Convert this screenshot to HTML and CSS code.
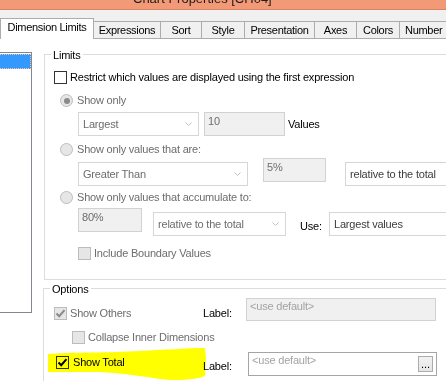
FILE: index.html
```html
<!DOCTYPE html>
<html>
<head>
<meta charset="utf-8">
<title>Chart Properties</title>
<link rel="stylesheet" href="styles.css">
</head>
<body>
<div class="titlebar"><span class="title">Chart Properties [CH04]</span></div>
<div class="tabstrip">
  <div class="tab active t-dim">Dimension Limits</div>
  <div class="tab t-expr">Expressions</div>
  <div class="tab t-sort">Sort</div>
  <div class="tab t-style">Style</div>
  <div class="tab t-pres">Presentation</div>
  <div class="tab t-axes">Axes</div>
  <div class="tab t-colors">Colors</div>
  <div class="tab t-number">Number</div>
</div>
<div class="panel">
  <div class="dimlist"><div class="dimitem"></div></div>
  <div class="groups">
    <fieldset class="group limits">
      <legend>Limits</legend>
      <div class="gbody limits-body">
        <div class="row r-restrict">
          <span class="cb"></span><span class="txt">Restrict which values are displayed using the first expression</span>
        </div>
        <div class="row r-showonly">
          <span class="radio on"></span><span class="txt dis">Show only</span>
        </div>
        <div class="row r-largest">
          <div class="combo w-largest"><span class="ctext dis">Largest</span><svg class="chev" width="7" height="4" viewBox="0 0 7 4"><path d="M0.5 0.5 L3.5 3.5 L6.5 0.5"/></svg></div>
          <div class="edit w-ten">10</div>
          <span class="txt values">Values</span>
        </div>
        <div class="row r-radio2">
          <span class="radio"></span><span class="txt dis">Show only values that are:</span>
        </div>
        <div class="row r-greater">
          <div class="combo w-greater drop"><span class="ctext dis">Greater Than</span><svg class="chev" width="7" height="4" viewBox="0 0 7 4"><path d="M0.5 0.5 L3.5 3.5 L6.5 0.5"/></svg></div>
          <div class="edit w-five">5%</div>
          <div class="combo w-rel1 drop"><span class="ctext dark">relative to the total</span></div>
        </div>
        <div class="row r-radio3">
          <span class="radio"></span><span class="txt dis">Show only values that accumulate to:</span>
        </div>
        <div class="row r-accum">
          <div class="edit w-eighty">80%</div>
          <div class="combo w-rel2 drop"><span class="ctext dis">relative to the total</span><svg class="chev" width="7" height="4" viewBox="0 0 7 4"><path d="M0.5 0.5 L3.5 3.5 L6.5 0.5"/></svg></div>
          <span class="txt use">Use:</span>
          <div class="combo w-lv drop"><span class="ctext dark">Largest values</span></div>
        </div>
        <div class="row r-include">
          <span class="cb dis"></span><span class="txt dis">Include Boundary Values</span>
        </div>
      </div>
    </fieldset>
    <fieldset class="group options">
      <legend>Options</legend>
      <div class="gbody options-body">
        <div class="row r-others">
          <div class="opt-left w-left1">
            <span class="cb dis"><svg width="11" height="11" viewBox="0 0 11 11"><path class="chk dischk" d="M1.5 5.5 L4.2 8.2 L9.5 2.2"/></svg></span><span class="txt dis">Show Others</span>
          </div>
          <span class="txt lab w-lab1">Label:</span>
          <div class="edit field w-field1">&lt;use default&gt;</div>
        </div>
        <div class="row r-collapse">
          <span class="cb dis"></span><span class="txt dis">Collapse Inner Dimensions</span>
        </div>
        <div class="row r-total">
          <div class="opt-left w-left2">
            <span class="cb"><svg width="11" height="11" viewBox="0 0 11 11"><path class="chk" d="M1.5 5.5 L4.2 8.2 L9.5 2.2"/></svg></span><span class="txt">Show Total</span>
          </div>
          <span class="txt lab lab2 w-lab2">Label:</span>
          <div class="field2 w-field2"><span class="ph">&lt;use default&gt;</span><span class="dots">...</span></div>
        </div>
      </div>
    </fieldset>
  </div>
</div>
<svg class="highlight" width="446" height="381" viewBox="0 0 446 381"><path d="M48,354 C70,352 110,353 140,351 C165,350 185,348 205,348 L206,358 L205,376 C195,380 175,381 160,379 C140,376 120,373 100,372 L48,372 Z"/></svg>
</body>
</html>
```

FILE: styles.css
```css
html, body {
  margin: 0;
  padding: 0;
}

body {
  width: 446px;
  height: 381px;
  overflow: hidden;
  position: relative;
  background: #ffffff;
  font-family: "Liberation Sans", Arial, sans-serif;
  font-size: 11px;
  letter-spacing: -0.2px;
  color: #000000;
}

/* title bar */
.titlebar {
  height: 9px;
  background: #f29a77;
  border-bottom: 1px solid #d9825f;
  overflow: hidden;
  padding-left: 133px;
}

.title {
  display: block;
  font-size: 13px;
  line-height: 13px;
  margin-top: -8px;
  letter-spacing: 0;
  color: #1c1c1c;
  white-space: nowrap;
}

/* tabs */
.tabstrip {
  height: 29px;
  background: #f0f0f0;
  display: flex;
  align-items: flex-end;
  overflow: hidden;
}

.tab {
  flex: none;
  box-sizing: border-box;
  height: 18px;
  border: 1px solid #acacac;
  border-left: none;
  background: #f0f0f0;
  text-align: center;
  line-height: 16px;
  font-size: 11px;
  letter-spacing: -0.3px;
  white-space: nowrap;
  overflow: hidden;
}

.tab.active {
  height: 21px;
  border-left: 1px solid #acacac;
  border-bottom: none;
  background: #ffffff;
  line-height: 17px;
}

.t-dim { width: 94px; }
.t-expr { width: 67px; }
.t-sort { width: 41px; }
.t-style { width: 43px; }
.t-pres { width: 70px; }
.t-axes { width: 42px; }
.t-colors { width: 43px; }
.t-number { width: 47px; text-align: left; padding-left: 5px; }

/* panel */
.panel {
  display: flex;
  align-items: flex-start;
  background: #ffffff;
}

.dimlist {
  flex: none;
  box-sizing: border-box;
  width: 42px;
  height: 261px;
  margin-top: 13px;
  margin-left: -10px;
  border: 1px solid #828790;
  background: #ffffff;
}

.dimitem {
  box-sizing: border-box;
  height: 15px;
  margin-top: 1px;
  background: #3399ff;
  border: 1px dotted #f6c7a4;
}

.groups {
  flex: none;
  margin-left: 11px;
  display: flex;
  flex-direction: column;
}

.group {
  margin: 0;
  padding: 0;
  min-width: 0;
  width: 520px;
  box-sizing: border-box;
  border: 1px solid #dcdcdc;
}

.group legend {
  padding: 2px 2px 0 2px;
  margin-left: 6px;
  line-height: 13px;
  font-size: 11px;
}

.limits {
  margin-top: 8px;
  margin-left: 1px;
}

.options {
  margin-top: 1px;
  border-bottom: none;
  height: 120px;
}

.limits-body {
  padding: 0 0 19px 9px;
}

.options-body {
  padding: 0 0 0 10px;
}

.row {
  display: flex;
  align-items: center;
  white-space: nowrap;
}

.txt {
  line-height: 13px;
}

.dis {
  color: #6d6d6d;
}

/* checkboxes and radios */
.cb {
  flex: none;
  box-sizing: border-box;
  width: 13px;
  height: 13px;
  border: 1px solid #333333;
  background: #ffffff;
  display: flex;
}

.cb.dis {
  border-color: #bcbcbc;
  background: #e6e6e6;
}

.chk {
  fill: none;
  stroke: #000000;
  stroke-width: 2;
}

.chk.dischk {
  stroke: #8a8a8a;
}

.radio {
  flex: none;
  box-sizing: border-box;
  width: 13px;
  height: 13px;
  border-radius: 50%;
  border: 1px solid #bcbcbc;
  background: #e6e6e6;
  margin-left: 6px;
  display: flex;
  align-items: center;
  justify-content: center;
}

.radio.on::after {
  content: "";
  width: 6px;
  height: 6px;
  border-radius: 50%;
  background: #8a8a8a;
}

.cb + .txt {
  margin-left: 3px;
}

.radio + .txt {
  margin-left: 4px;
}

/* combos and edits */
.combo {
  flex: none;
  box-sizing: border-box;
  height: 24px;
  border: 1px solid #d6d6d6;
  background: #ffffff;
  display: flex;
  align-items: center;
  justify-content: space-between;
  padding-left: 4px;
  overflow: hidden;
}

.ctext {
  line-height: 13px;
}

.ctext.dark {
  color: #3c3c3c;
}

.chev {
  flex: none;
  margin-right: 6px;
}

.chev path {
  fill: none;
  stroke: #c2c2c2;
  stroke-width: 1;
}

.edit {
  flex: none;
  box-sizing: border-box;
  height: 24px;
  border: 1px solid #d2d2d2;
  background: #f0f0f0;
  color: #6d6d6d;
  line-height: 13px;
  padding: 2px 0 0 3px;
}

/* limits rows */
.r-restrict { margin-top: 9px; height: 13px; }
.r-showonly { margin-top: 10px; height: 13px; }
.r-largest { margin-top: 5px; height: 24px; }
.r-radio2 { margin-top: 7px; height: 13px; }
.r-greater { margin-top: 2px; height: 28px; align-items: flex-start; }
.r-radio3 { margin-top: 5px; height: 13px; }
.r-accum { margin-top: 4px; height: 28px; align-items: flex-start; }
.r-include { margin-top: 11px; height: 13px; }

.w-largest { margin-left: 24px; width: 121px; }
.w-ten { margin-left: 5px; width: 81px; }
.values { margin-left: 3px; }

.drop { margin-top: 4px; }
.w-greater { margin-left: 24px; width: 170px; }
.w-five { margin-left: 15px; width: 63px; }
.w-rel1 { margin-left: 19px; width: 140px; }

.w-eighty { margin-left: 24px; width: 64px; }
.w-rel2 { margin-left: 11px; width: 133px; }
.use { margin-left: 14px; margin-top: 12px; width: 29px; color: #000000; }
.w-lv { width: 140px; }

.r-include .cb { margin-left: 24px; }

/* options rows */
.r-others { margin-top: 2px; height: 23px; align-items: flex-start; }
.r-collapse { margin-top: 10px; height: 13px; }
.r-collapse .cb { margin-left: 18px; }
.r-total { margin-top: 8px; height: 24px; align-items: flex-start; }

.opt-left {
  flex: none;
  display: flex;
  align-items: center;
  height: 13px;
}

.w-left1 { width: 149px; margin-top: 9px; }
.w-left2 { width: 147px; margin-top: 4px; margin-left: 2px; }
.w-left2 .txt { margin-left: 4px; }

.lab { flex: none; margin-top: 9px; }
.lab2 { margin-top: 8px; }
.w-lab1 { width: 43px; }
.w-lab2 { width: 45px; }

.field {
  height: 23px;
  color: #a3a3a3;
  padding-top: 1px;
}

.w-field1 { width: 190px; }

.field2 {
  flex: none;
  box-sizing: border-box;
  height: 24px;
  border: 1px solid #a5a5a5;
  background: #ffffff;
  display: flex;
  justify-content: space-between;
  align-items: flex-start;
  padding: 1px 3px 0 3px;
}

.w-field2 { width: 189px; }

.ph {
  color: #a3a3a3;
  line-height: 13px;
}

.dots {
  box-sizing: border-box;
  width: 15px;
  height: 16px;
  margin-top: 2px;
  border: 1px solid #acacac;
  background: linear-gradient(#f2f2f2, #e5e5e5);
  line-height: 14px;
  text-align: center;
  letter-spacing: 0;
  color: #000000;
}

/* marker highlight drawn over the screenshot */
.highlight {
  position: absolute;
  left: 0;
  top: 0;
  pointer-events: none;
  mix-blend-mode: multiply;
}

.highlight path {
  fill: #ffff00;
}
```
